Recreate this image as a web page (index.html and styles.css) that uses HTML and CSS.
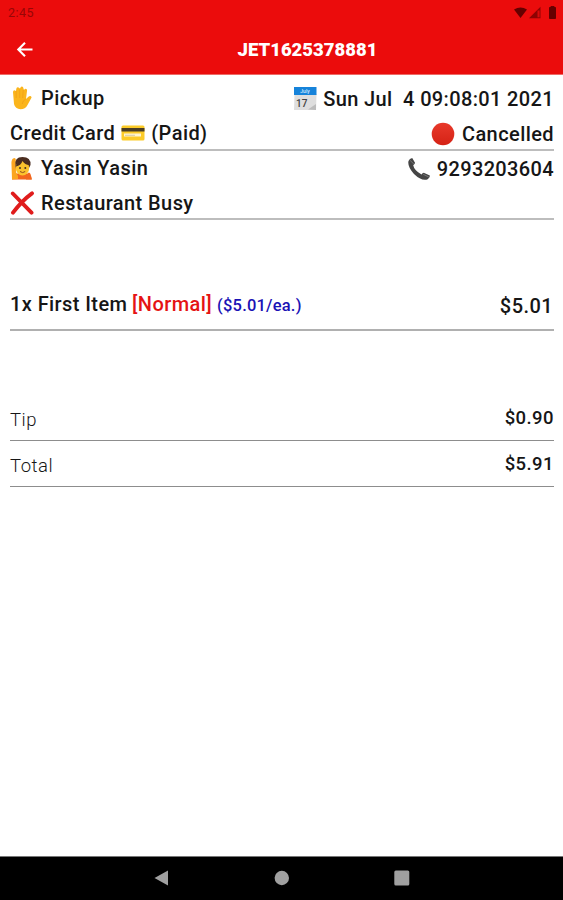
FILE: index.html
```html
<!DOCTYPE html>
<html lang="en">
<head>
<meta charset="utf-8">
<title>JET1625378881</title>
<link rel="stylesheet" href="styles.css">
</head>
<body>
<header class="top">
  <div class="status">
    <span class="clock">2:45</span>
    <svg class="status-icons" width="44" height="14" viewBox="0 0 44 14">
      <path d="M1 3.600Q7.500 -.6 14 3.600L7.500 12Z" fill="#650000"/>
      <path d="M27.500 .8V12.200H16Z" fill="#8d0303"/>
      <path d="M24.500 4.500H26.600V11.300H24.500Z" fill="#d90b0b"/>
      <path d="M36.500 1.500h1.500V.3h3v1.200h1.500V12.500h-6Z" fill="#650000" stroke="#650000" stroke-linejoin="round"/>
    </svg>
  </div>
  <div class="appbar">
    <svg class="back" width="18" height="18" viewBox="0 0 18 18"><path d="M16.500 8.500H2.500M9 1.800L2.300 8.500L9 15.200" fill="none" stroke="#fff" stroke-width="2.100"/></svg>
    <h1 class="title">JET1625378881</h1>
  </div>
</header>
<main class="order">
  <section class="block details">
    <div class="row">
      <span class="cell"><svg class="emoji" width="24" height="24" viewBox="0 0 24 24">
        <path d="M3 6Q3 4.300 4.500 4.300L6 5L6.300 2.700Q6.800 1.200 8.100 1.300L10 2.500Q10.800 .2 12.100 .5T13.500 2.500L14 4Q15.100 2.300 16.300 2.900T17 5L16 13L18.400 10.700Q19.800 9.500 21 10.200Q22.300 11.200 20.900 12.800L17.500 19Q15.300 23.300 10.500 23.300Q5.200 23 4 18Z" fill="#fbb51c"/>
        <path d="M6.200 5V12M9.700 3.500V12M13.200 4L12.700 12M15.800 13Q12.600 14.500 12.300 18" fill="none" stroke="#f0a018" stroke-width=".8"/>
      </svg><span class="pickup">Pickup</span></span>
      <span class="cell"><svg class="emoji cal" width="24" height="24" viewBox="0 0 24 24">
        <path d="M1.500 8H23.500L23 24H1Z" fill="#dedede"/><path d="M1 1H23.500V9H1Z" fill="#1683da"/><path d="M15 23.500L23 18V24Z" fill="#bcbcbc"/>
        <text x="12" y="7.200" class="cal-month" text-anchor="middle">July</text><text x="3" y="21" class="cal-day">17</text>
      </svg><span class="date">Sun Jul  4 09:08:01 2021</span></span>
    </div>
    <div class="row">
      <span class="cell"><span class="credit">Credit Card</span><svg class="card" width="24" height="16" viewBox="0 0 24 16">
        <rect x=".5" y=".5" width="23" height="15" rx="1.500" fill="#fccb28"/><path d="M.5 3H23.500V6.500H.5Z" fill="#493c24"/><path d="M3 8.500H20V11.500H3Z" fill="#fff5d2"/><path d="M4 10.300h10" stroke="#c4b891" stroke-width=".7"/>
      </svg><span class="paid">(Paid)</span></span>
      <span class="cell low"><svg class="emoji" width="24" height="24" viewBox="0 0 24 24">
        <defs><linearGradient id="red" x2="0" y2="1"><stop stop-color="#e8392b"/><stop offset="1" stop-color="#d52215"/></linearGradient></defs>
        <circle cx="12" cy="12" r="11.300" fill="url(#red)"/>
      </svg><span class="cancelled">Cancelled</span></span>
    </div>
  </section>
  <section class="block customer">
    <div class="row">
      <span class="cell"><svg class="emoji" width="24" height="24" viewBox="0 0 24 24">
        <path d="M2 23.500Q2 17.500 7 17.500H16Q21.500 17.500 21.500 23.500Z" fill="#f2671d"/>
        <path d="M2 23.500L1.500 9Q1 4 3 2.500Q5.500 1 5.800 3.500L6 16L8 20V23Z" fill="#fba51f"/>
        <path d="M5.500 10Q4 1 12.500 1Q21 1 20.500 9L18.500 13H6Z" fill="#4b2d20"/>
        <ellipse cx="12.500" cy="12" rx="6.700" ry="7.500" fill="#fcc32d"/>
        <path d="M5.800 10.500Q11 9.500 12.500 5Q15 9 19.200 9L18.500 3L9 2.500Z" fill="#4b2d20"/>
        <circle cx="10" cy="12" r="1" fill="#493322"/><circle cx="15.300" cy="12" r="1" fill="#493322"/>
        <path d="M10 15.500Q12.600 17.700 15.200 15.500" fill="none" stroke="#8e4c1e"/>
        <path d="M17 18Q19 15 20.500 18L22 23.500H16Z" fill="#f2671d"/>
      </svg><span class="name">Yasin Yasin</span></span>
      <span class="cell low"><svg class="emoji phone" width="24" height="24" viewBox="0 0 24 24">
        <path d="M1.500 4Q2.500 1.300 5.200 1L7.900 5.600Q8.300 6.800 6.200 8.300Q7.200 13.500 14.500 17.500Q15.600 15.600 17.300 15.900L22.800 18.500Q23.300 20.500 20.300 22.400Q14.500 24.300 7 17Q.2 9.700 1.500 4Z" fill="#454545"/>
        <path d="M3.200 3.500L6.800 7M16.200 17.300L21.800 20" stroke="#777" stroke-width="1"/>
      </svg><span class="number">9293203604</span></span>
    </div>
    <div class="row">
      <span class="cell"><svg class="emoji" width="24" height="24" viewBox="0 0 24 24"><path d="M2.800 2.500L21.500 21.700M22 2.300Q12 9.500 3 21.700" fill="none" stroke="#e01c1c" stroke-width="3.900" stroke-linecap="round"/></svg><span class="busy">Restaurant Busy</span></span>
    </div>
  </section>
  <section class="block item">
    <span class="cell"><span class="item-name">1x First Item</span><span class="variant">[Normal]</span><span class="each">($5.01/ea.)</span></span>
    <span class="price">$5.01</span>
  </section>
  <section class="block tip"><span class="label">Tip</span><span class="amount">$0.90</span></section>
  <section class="block total"><span class="label">Total</span><span class="amount">$5.91</span></section>
</main>
<nav class="nav">
  <svg class="key" width="16" height="18" viewBox="0 0 16 18"><path d="M.5 9L14 1.500V16.500Z" fill="#a0a0a0"/></svg>
  <svg class="key" width="16" height="18" viewBox="0 0 16 18"><circle cx="7.800" cy="9" r="7.200" fill="#a0a0a0"/></svg>
  <svg class="key" width="16" height="18" viewBox="0 0 16 18"><rect x=".3" y="1.500" width="15" height="15" rx="1.500" fill="#a0a0a0"/></svg>
</nav>
</body>
</html>
```

FILE: styles.css
```css
* { box-sizing: border-box; }
body {
  margin: 0;
  height: 900px;
  display: flex;
  flex-direction: column;
  background: #fff;
  color: #161616;
  font-family: Roboto, "Liberation Sans", sans-serif;
  font-size: 20px;
  font-weight: 500;
  line-height: 24px;
  letter-spacing: .42px;
  overflow: hidden;
}
svg { display: block; flex: none; }
.top { height: 75px; background: #eb0c0c; border-bottom: 1px solid #ee6a66; }
.status { height: 25px; padding: 0 6px 0 8px; display: flex; justify-content: space-between; align-items: center; }
.clock { font-size: 12.500px; font-weight: 400; color: #980606; letter-spacing: .5px; }
.appbar { height: 49px; display: grid; grid-template-columns: 36px 1fr; align-items: center; padding-left: 16px; }
.title { margin: 0; font-size: 18.500px; font-weight: 900; color: #fff; text-align: center; letter-spacing: 0; }
.order { flex: 1; padding: 0 9px 0 10px; }
.block { border-bottom: 2px solid #bdbdbd; }
.row, .item, .tip, .total { display: flex; justify-content: space-between; }
.cell { display: flex; align-items: center; height: 24px; white-space: pre; }
.details { height: 76px; padding-top: 11px; }
.details .row { height: 35px; }
.low { padding-top: 2px; }
.customer { height: 69px; padding-top: 5px; }
.customer .row { height: 35px; }
.emoji { margin-right: 7px; }
.cal { margin-right: 6px; }
.date { padding-top: 1px; letter-spacing: .36px; }
.phone { margin-right: 6px; }
.number { letter-spacing: .36px; }
.cal-month { font-size: 5px; fill: #d5eaff; letter-spacing: 0; }
.cal-day { font-size: 10px; fill: #444; letter-spacing: 0; }
.card { margin: 0 6px; }
.item { height: 111px; padding-top: 72px; border-color: #b0b0b0; }
.variant { margin-left: 4.500px; color: #e51313; }
.each { margin-left: 5px; padding-top: 3px; font-size: 16.500px; letter-spacing: .2px; color: #1a12b5; }
.price { padding-top: 2px; margin-right: 1px; }
.tip { height: 110px; padding-top: 75px; border-bottom: 1px solid #8d8d8d; }
.total { height: 46px; padding-top: 11px; border-bottom: 1px solid #8d8d8d; }
.label { padding-top: 2px; font-size: 18.500px; font-weight: 300; letter-spacing: .5px; }
.amount { font-size: 18.500px; }
.nav { height: 44px; padding-bottom: 1px; background: #000; border-top: 1px solid #777; display: flex; align-items: center; justify-content: center; gap: 104px; letter-spacing: 0; }
```
